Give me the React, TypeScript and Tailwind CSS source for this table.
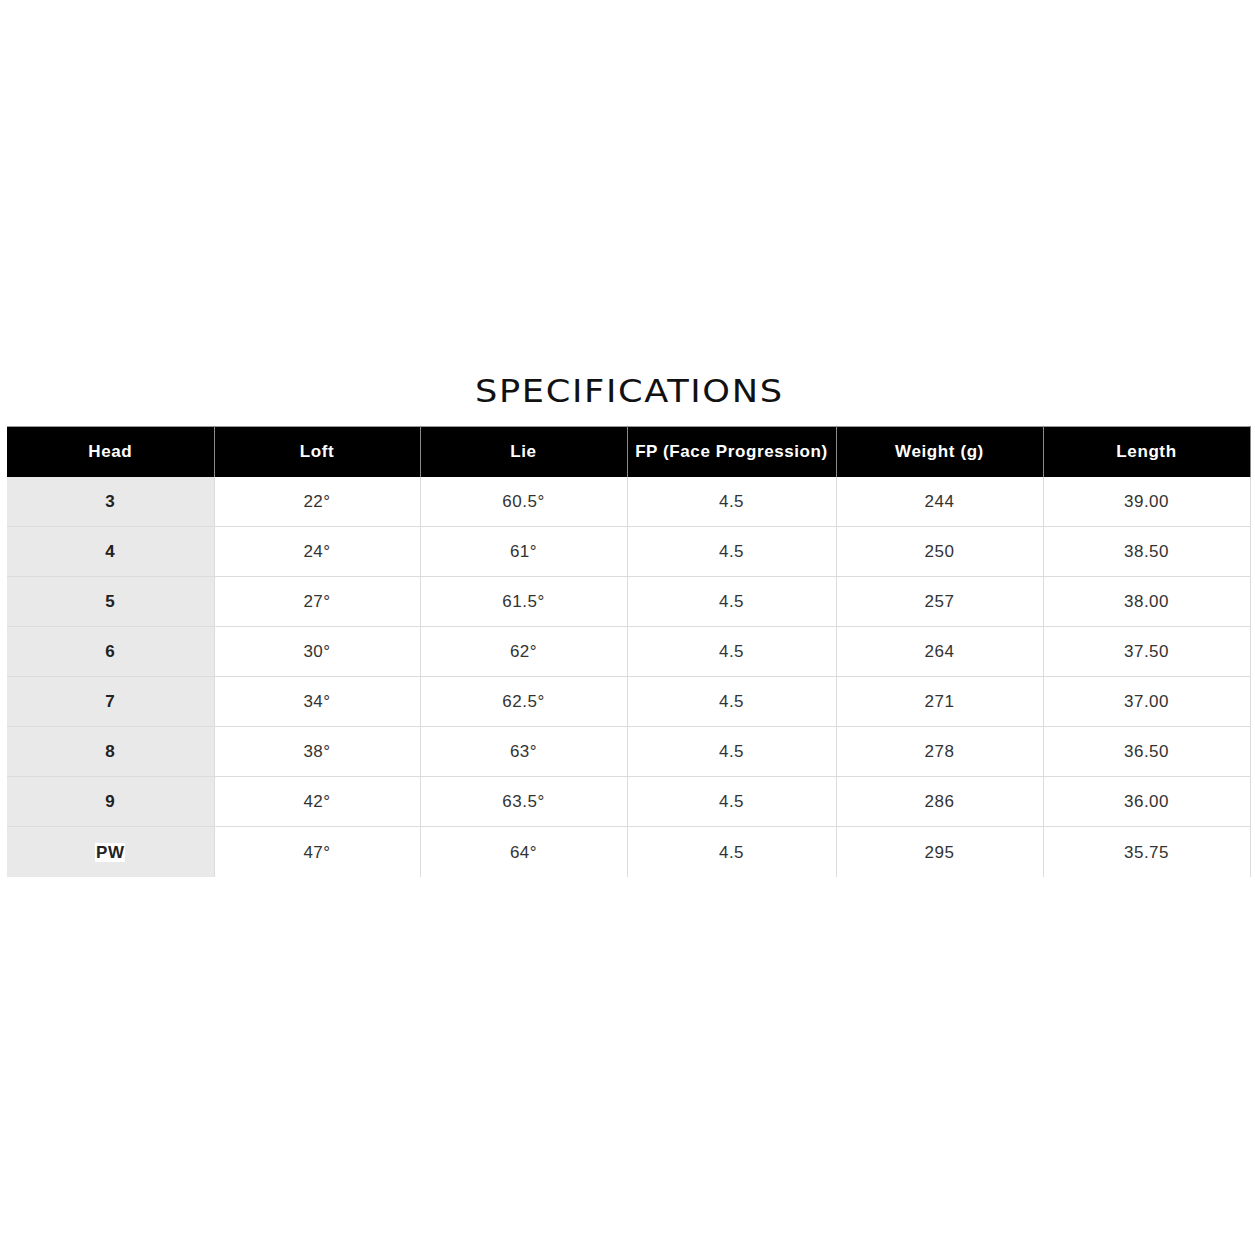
const headers = ["Head", "Loft", "Lie", "FP (Face Progression)", "Weight (g)", "Length"];

const rows = [
    ["3", "22°", "60.5°", "4.5", "244", "39.00"],
    ["4", "24°", "61°", "4.5", "250", "38.50"],
    ["5", "27°", "61.5°", "4.5", "257", "38.00"],
    ["6", "30°", "62°", "4.5", "264", "37.50"],
    ["7", "34°", "62.5°", "4.5", "271", "37.00"],
    ["8", "38°", "63°", "4.5", "278", "36.50"],
    ["9", "42°", "63.5°", "4.5", "286", "36.00"],
    ["PW", "47°", "64°", "4.5", "295", "35.75"],
];

const widths = ["w-[207px]", "w-[206px]", "w-[207px]", "w-[209px]", "w-[207px]", "w-[207px]"];

export default function App() {
    return (
        <div className="w-[1255px] h-[1255px] bg-white font-['Liberation_Sans',Arial,sans-serif]">
            <div className="pt-[372px] flex flex-col items-center">
                <h2 className="font-['DejaVu_Sans',sans-serif] text-[32px] leading-[38px] tracking-[1.5px] scale-x-[1.1] text-[#111] ml-[4px]">
                    SPECIFICATIONS
                </h2>
            </div>
            <div className="mt-[16px] pl-[7px]">
                <table className="table-fixed border-collapse w-[1243px]">
                    <thead>
                        <tr className="bg-black h-[50px] border-t border-[#999]">
                            {headers.map((h, i) => (
                                <th
                                    key={h}
                                    className={`${widths[i]} text-white font-bold text-[17px] tracking-[0.6px] text-center align-middle ${i > 0 ? "border-l border-[#8a8a8a]" : ""} ${i === headers.length - 1 ? "border-r border-[#8a8a8a]" : ""}`}
                                >
                                    {h}
                                </th>
                            ))}
                        </tr>
                    </thead>
                    <tbody>
                        {rows.map((r, ri) => (
                            <tr key={r[0]} className={`h-[50px] ${ri > 0 ? "border-t border-[#dcdcdc]" : ""}`}>
                                {r.map((c, ci) => (
                                    <td
                                        key={ci}
                                        className={`text-center align-middle text-[17px] tracking-[0.5px] pt-[1px] ${ci === 0 ? "bg-[#e9e9e9] font-bold text-[#222]" : "text-[#333] border-l border-[#dcdcdc]"} ${ci === r.length - 1 ? "border-r border-[#dcdcdc]" : ""}`}
                                    >
                                        {c === "PW" ? <span className="bg-white px-[1px]">{c}</span> : c}
                                    </td>
                                ))}
                            </tr>
                        ))}
                    </tbody>
                </table>
            </div>
        </div>
    );
}
